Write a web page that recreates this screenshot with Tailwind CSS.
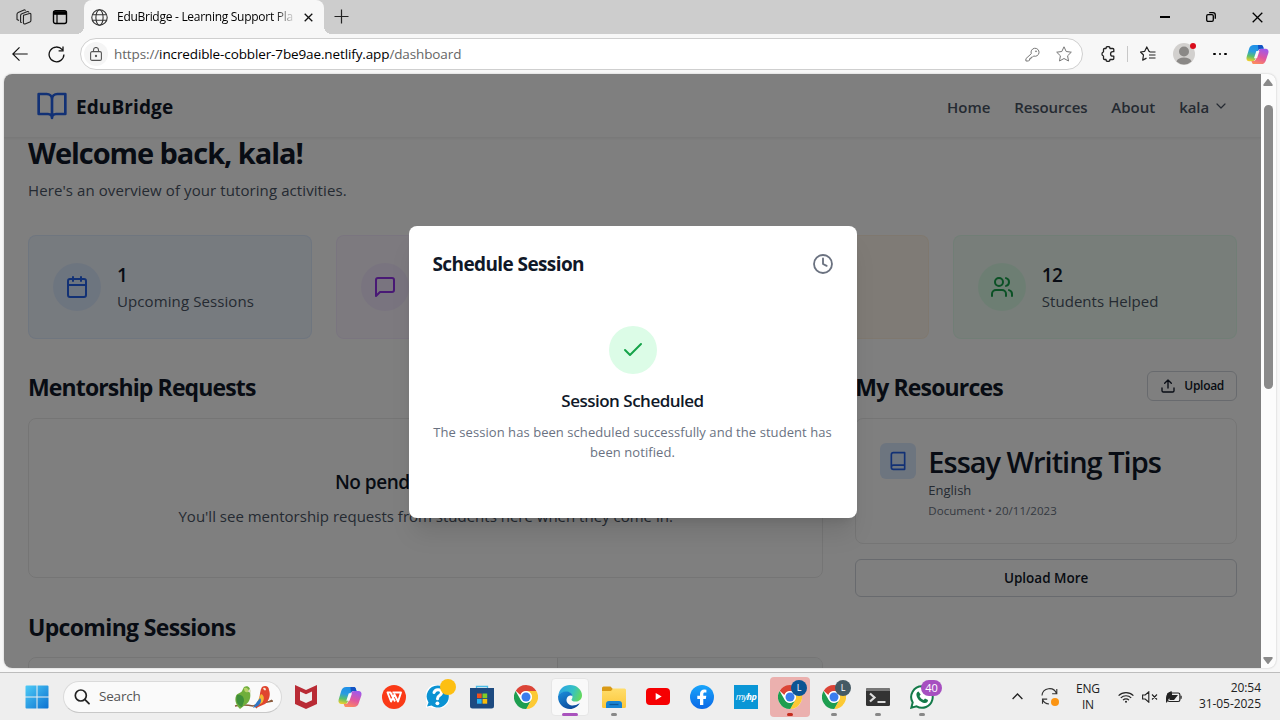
<!DOCTYPE html>
<html lang="en">
<head>
    <meta charset="UTF-8">
    <meta name="viewport" content="width=device-width, initial-scale=1.0">
    <title>EduBridge - Learning Support Platform</title>
    <script src="https://cdn.jsdelivr.net/npm/@tailwindcss/browser@4"></script>
</head>
<body class="w-[1280px] h-[720px] overflow-hidden flex flex-col bg-[#f7f7f7] font-['Open_Sans','Noto_Sans',sans-serif] text-black">

    <!-- Shared symbols -->
    <svg class="absolute size-0" xmlns="http://www.w3.org/2000/svg">
        <defs>
            <linearGradient id="cpA" x1="0.4" y1="0" x2="0.2" y2="1">
                <stop offset="0" stop-color="#1f8fe8"/><stop offset="0.4" stop-color="#2a9ce0"/><stop offset="0.7" stop-color="#5cc06a"/><stop offset="1" stop-color="#f5d02c"/>
            </linearGradient>
            <linearGradient id="cpB" x1="0.6" y1="0" x2="0.2" y2="1">
                <stop offset="0" stop-color="#a259e8"/><stop offset="0.5" stop-color="#e0569f"/><stop offset="1" stop-color="#ff8f5a"/>
            </linearGradient>
            <linearGradient id="winG" x1="0" y1="0" x2="24" y2="24" gradientUnits="userSpaceOnUse">
                <stop offset="0" stop-color="#4fcdf7"/><stop offset="1" stop-color="#0a6fd0"/>
            </linearGradient>
            <linearGradient id="edgeA" x1="0" y1="0.2" x2="1" y2="0.5">
                <stop offset="0" stop-color="#2ba3e6"/><stop offset="0.6" stop-color="#35c1c5"/><stop offset="1" stop-color="#62d860"/>
            </linearGradient>
            <linearGradient id="edgeB" x1="0" y1="0" x2="0.6" y2="1">
                <stop offset="0" stop-color="#1b8fdc"/><stop offset="1" stop-color="#0c4a9b"/>
            </linearGradient>
            <linearGradient id="folder" x1="0" y1="0" x2="0" y2="1">
                <stop offset="0" stop-color="#ffdd6b"/><stop offset="1" stop-color="#fcc73a"/>
            </linearGradient>
            <linearGradient id="fb" x1="0" y1="0" x2="0" y2="1">
                <stop offset="0" stop-color="#19a5fb"/><stop offset="1" stop-color="#0a68e6"/>
            </linearGradient>
        </defs>
        <symbol id="copilot" viewBox="0 0 24 24">
            <path fill="url(#cpA)" d="M8.2 2h7.6c1 0 1.700.6 2 1.600L18.500 6h-2.800c-1.700 0-2.800.8-3.300 2.500l-2.700 8.200c-.5 1.400-1.400 2.300-2.900 2.300H3.500C1.200 19 0 17.200.6 14.800L3.300 5.800C4.100 3.300 5.600 2 8.200 2z"/>
            <path fill="#1453c4" d="M12.500 2h3.300c1 0 1.700.6 2 1.600l.7 2.400h-2.800c-1.300 0-2.200.5-2.800 1.500z"/>
            <path fill="url(#cpB)" d="M15.800 22H8.200c-1 0-1.700-.6-2-1.600L5.700 18.900h1.600c1.700 0 2.500-.7 3-2.200l2.700-8.200c.5-1.700 1.500-2.500 3.200-2.500h4.300c2.300 0 3.500 1.800 2.900 4.200l-2.700 8c-.8 2.500-2.300 3.800-4.900 3.800z"/>
            <path fill="#f7f7f7" d="M10.800 8.300h3.200l-2.500 7.500H8.300z"/>
        </symbol>
        <symbol id="chrome" viewBox="0 0 48 48">
            <circle cx="24" cy="24" r="24" fill="#fff"/>
            <path fill="#db4437" d="M24 0a24 24 0 0 1 20.800 12H24a12 12 0 0 0-11.300 8L3.400 11.700A24 24 0 0 1 24 0z"/>
            <path fill="#fcc934" d="M44.800 12A24 24 0 0 1 24 48l10.400-18A12 12 0 0 0 34.400 18 12 12 0 0 0 24 12z"/>
            <path fill="#1e9e50" d="M24 48A24 24 0 0 1 3.200 12l10.400 18A12 12 0 0 0 24 36a12 12 0 0 0 8-3L24 48z"/>
            <path fill="#1e9e50" d="M24 48l10.400-18A12 12 0 0 1 24 36z"/>
            <circle cx="24" cy="24" r="11.500" fill="#fff"/>
            <circle cx="24" cy="24" r="9" fill="#3b7ded"/>
        </symbol>
    </svg>

    <!-- Tab strip -->
    <div class="h-[34px] shrink-0 bg-[#cdcdcd] flex items-stretch">
        <div class="w-[84px] flex items-center pl-4 gap-[20px]">
            <svg class="size-4" viewBox="0 0 16 16" fill="none" stroke="#222" stroke-width="1.100" stroke-linejoin="round">
                <path d="M7.500 6.200 13.500 4.500a1 1 0 0 1 1.400.9v6.200a1.500 1.500 0 0 1-1 1.400L9 15a1.300 1.300 0 0 1-1.600-1.200z"/>
                <path d="M5.800 13.500 4.600 13.200V6.500a2 2 0 0 1 1.300-1.800L11.500 2.600a1 1 0 0 1 1.300.9"/>
                <path d="M3 11.600 1 10.500V5.200a2 2 0 0 1 1.200-1.800L8 .9a1 1 0 0 1 1.400.8"/>
            </svg>
            <svg class="size-4" viewBox="0 0 16 16" fill="none" stroke="#000" stroke-width="1.400">
                <rect x="1.500" y="1.700" width="13" height="12.800" rx="2"/>
                <path d="M1.500 4h13" stroke-width="3.600"/>
                <path d="M5 4v10" stroke-width="1.200"/>
            </svg>
        </div>
        <div class="w-[240px] bg-[#f7f7f7] rounded-t-lg flex items-center pl-[7px] relative">
            <svg class="size-[17px]" viewBox="0 0 17 17" fill="none" stroke="#333" stroke-width="1.100">
                <circle cx="8.500" cy="8.500" r="7.700"/><ellipse cx="8.500" cy="8.500" rx="3.600" ry="7.700"/>
                <path d="M1.500 5.800h14M1.500 11.200h14"/>
            </svg>
            <span class="ml-[9px] w-[179px] whitespace-nowrap text-[12px] tracking-[-0.28px] pb-px mask-r-from-88%">EduBridge - Learning Support Pla</span>
            <svg class="size-[9px] ml-[8px]" viewBox="0 0 9 9" stroke="#111" stroke-width="1.300"><path d="M.7.700l7.600 7.600M8.300.700.7 8.300"/></svg>
            <div class="absolute -left-2 bottom-0 size-2 bg-[radial-gradient(circle_at_0_0,transparent_8px,#f7f7f7_8px)]"></div>
            <div class="absolute -right-2 bottom-0 size-2 bg-[radial-gradient(circle_at_100%_0,transparent_8px,#f7f7f7_8px)]"></div>
        </div>
        <div class="flex-1 flex items-center pl-[10px] pb-[2px]">
            <svg class="size-[15px]" viewBox="0 0 15 15" stroke="#222" stroke-width="1.200"><path d="M7.500.5v14M.5 7.500h14"/></svg>
        </div>
        <div class="flex items-center pr-[17px] gap-[36px]">
            <div class="w-[10px] h-[1.500px] bg-black"></div>
            <svg class="size-[10px]" viewBox="0 0 10 10" fill="none" stroke="#000" stroke-width="1.300"><rect x=".7" y="2.700" width="6.600" height="6.600" rx="1.300"/><path d="M3.200.7H7A2.300 2.300 0 0 1 9.300 3v3.800"/></svg>
            <svg class="size-[11px]" viewBox="0 0 11 11" stroke="#000" stroke-width="1.300"><path d="m.7.700 9.600 9.600M10.300.7.700 10.300"/></svg>
        </div>
    </div>

    <!-- Toolbar -->
    <div class="h-[40px] shrink-0 flex items-center pl-3">
        <svg class="size-4" viewBox="0 0 16 16" fill="none" stroke="#111" stroke-width="1.200"><path d="M15.700 8H.8M7.500 1.300.8 8l6.700 6.700"/></svg>
        <svg class="size-[17px] ml-[20px]" viewBox="0 0 17 17" fill="none" stroke="#111" stroke-width="1.300"><path d="M14.200 3.700A7.400 7.400 0 1 0 15.900 8.500M15 .6v4.300h-4.400"/></svg>
        <div class="ml-[15px] w-[1003px] h-8 rounded-full border border-[#cfcfcf] bg-white flex items-center pl-[3px]">
            <div class="size-6 rounded-full bg-[#f5f5f5] flex items-center justify-center">
                <svg class="w-3 h-[14px]" viewBox="0 0 12 14" fill="none" stroke="#555" stroke-width="1.100"><rect x=".6" y="4.600" width="10.800" height="8.800" rx="1.500"/><path d="M3.500 4.500V3a2.500 2.500 0 0 1 5 0v1.500"/><circle cx="6" cy="9" r=".6" fill="#555"/></svg>
            </div>
            <span class="ml-[6px] text-[13.500px] tracking-[-0.12px] text-[#666] whitespace-nowrap">https://<span class="text-black">incredible-cobbler-7be9ae.netlify.app</span>/dashboard</span>
            <svg class="ml-auto size-[15px]" viewBox="0 0 15 15" fill="none" stroke="#777" stroke-width="1"><path d="M6.300 6.700A4 4 0 1 1 8.600 9L7.300 10.300H6v1.400H4.600V13L3.600 14H.9v-2.300z"/><circle cx="11" cy="4.300" r=".5"/></svg>
            <svg class="ml-[16px] mr-[10px] size-4" viewBox="0 0 16 16" fill="none" stroke="#777" stroke-width="1" stroke-linejoin="round"><path d="m8 .8 2.200 4.700 5.100.7-3.700 3.600.9 5.200L8 12.500 3.500 15l.9-5.200L.7 6.200l5.100-.7z"/></svg>
        </div>
        <svg class="ml-[17px] size-4" viewBox="0 0 16 16" fill="none" stroke="#222" stroke-width="1.300" stroke-linejoin="round"><path d="M4.500 2.500H6a2 2 0 0 1 4 0h2.800a1 1 0 0 1 1 1v2.200h-1a2.200 2.200 0 0 0 0 4.500h1v2.300a1 1 0 0 1-1 1H10a2 2 0 0 1-4 0H4.500a1 1 0 0 1-1-1v-2.500a2.200 2.200 0 0 1 0-4.200V3.500a1 1 0 0 1 1-1z"/></svg>
        <div class="ml-[11px] w-px h-4 bg-[#c8c8c8]"></div>
        <svg class="ml-3 size-4" viewBox="0 0 16 16" fill="none" stroke="#222" stroke-width="1.200" stroke-linejoin="round"><path d="M10 5.500 9 5.300 6.800.9 4.700 5.300l-4.200.7 3 3-.8 5.100 3.800-2M9.500 6h6M9 9h6.500M9 12h6.500"/></svg>
        <div class="ml-[17px] size-[22px] rounded-full bg-[#d2d0ce] relative">
            <svg class="size-[22px]" viewBox="0 0 22 22" fill="#8a8886"><circle cx="11" cy="8.500" r="5"/><path d="M3.500 18.500c1-3 4-4 7.500-4s6.500 1 7.500 4a11 11 0 0 1-15 0z"/></svg>
            <div class="absolute -right-[1px] top-0 size-[6px] rounded-full bg-[#d90d1c]"></div>
        </div>
        <div class="ml-[18px] flex gap-[3px]">
            <div class="size-[2.500px] rounded-full bg-black"></div><div class="size-[2.500px] rounded-full bg-black"></div><div class="size-[2.500px] rounded-full bg-black"></div>
        </div>
        <svg class="ml-[19px] size-[23px]"><use href="#copilot"/></svg>
    </div>

    <!-- Viewport -->
    <div class="h-[594px] shrink-0 mx-1 flex rounded-lg overflow-hidden bg-[#fcfcfc] shadow-[0_0_2px_#bbb]">
        <div class="w-[1257px] relative overflow-hidden bg-white">
            <nav class="relative z-10 h-16 bg-white border-b border-[#f3f3f3] shadow-xs flex items-center pl-8 pr-[33px]">
                <svg class="size-8" viewBox="0 0 24 24" fill="none" stroke="#2563eb" stroke-width="2" stroke-linecap="round" stroke-linejoin="round"><path d="M2 3h6a4 4 0 0 1 4 4v14a3 3 0 0 0-3-3H2zM22 3h-6a4 4 0 0 0-4 4v14a3 3 0 0 1 3-3h7z"/></svg>
                <span class="ml-2 mt-[3px] text-[19px] font-bold tracking-[0.1px] text-gray-900">EduBridge</span>
                <div class="ml-auto flex items-center gap-6 text-[15px] font-semibold text-gray-600">
                    <span class="mt-[3px]">Home</span>
                    <span class="mt-[3px] tracking-[-0.12px]">Resources</span>
                    <span class="mt-[3px]">About</span>
                    <span class="flex items-center gap-1"><span class="mt-[3px] tracking-[-0.1px]">kala</span>
                        <svg class="size-4 -mr-px" viewBox="0 0 24 24" fill="none" stroke="currentColor" stroke-width="1.800" stroke-linecap="round" stroke-linejoin="round"><path d="m6 9 6 6 6-6"/></svg>
                    </span>
                </div>
            </nav>

            <main class="px-6 -mt-[3px]">
                <h1 class="text-[29px] leading-9 font-bold tracking-[-1.060px] text-gray-900">Welcome back, kala!</h1>
                <p class="mt-[7px] text-[15px] leading-6 tracking-[0.09px] text-gray-600">Here's an overview of your tutoring activities.</p>

                <div class="mt-[33px] grid grid-cols-4 gap-6">
                    <div class="h-[104px] rounded-lg border border-blue-100/80 bg-blue-50 flex items-center px-6">
                        <div class="size-12 rounded-full bg-blue-100 flex items-center justify-center">
                            <svg class="size-6" viewBox="0 0 24 24" fill="none" stroke="#2563eb" stroke-width="2" stroke-linecap="round" stroke-linejoin="round"><rect x="3" y="4" width="18" height="18" rx="2"/><path d="M16 2v4M8 2v4M3 10h18"/></svg>
                        </div>
                        <div class="ml-4">
                            <div class="text-[19px] leading-7 font-semibold text-gray-900">1</div>
                            <div class="text-[15px] leading-6 tracking-[0.1px] text-gray-600">Upcoming Sessions</div>
                        </div>
                    </div>
                    <div class="h-[104px] rounded-lg border border-purple-100/80 bg-purple-50 flex items-center px-6">
                        <div class="size-12 rounded-full bg-purple-100 flex items-center justify-center">
                            <svg class="size-6" viewBox="0 0 24 24" fill="none" stroke="#9333ea" stroke-width="2" stroke-linecap="round" stroke-linejoin="round"><path d="M21 15a2 2 0 0 1-2 2H7l-4 4V5a2 2 0 0 1 2-2h14a2 2 0 0 1 2 2z"/></svg>
                        </div>
                    </div>
                    <div class="h-[104px] rounded-lg border border-orange-100/60 bg-orange-50"></div>
                    <div class="h-[104px] rounded-lg border border-green-100/60 bg-green-50 flex items-center px-6">
                        <div class="size-12 rounded-full bg-green-100 flex items-center justify-center">
                            <svg class="size-6" viewBox="0 0 24 24" fill="none" stroke="#16a34a" stroke-width="2" stroke-linecap="round" stroke-linejoin="round"><path d="M16 21v-2a4 4 0 0 0-4-4H6a4 4 0 0 0-4 4v2"/><circle cx="9" cy="7" r="4"/><path d="M22 21v-2a4 4 0 0 0-3-3.870M16 3.130a4 4 0 0 1 0 7.750"/></svg>
                        </div>
                        <div class="ml-4">
                            <div class="text-[19px] leading-7 font-semibold tracking-[-0.6px] text-gray-900">12</div>
                            <div class="text-[15px] leading-6 tracking-[0.05px] text-gray-600">Students Helped</div>
                        </div>
                    </div>
                </div>

                <div class="mt-8 grid grid-cols-3 gap-8">
                    <div class="col-span-2">
                        <h2 class="text-[23px] leading-8 font-bold tracking-[-0.870px] text-gray-900">Mentorship Requests</h2>
                        <div class="mt-[15px] h-40 rounded-lg border border-[#ebebeb] flex flex-col items-center justify-center">
                            <h3 class="text-[19px] leading-7 font-semibold tracking-[-0.5px] text-gray-900">No pending requests</h3>
                            <p class="mt-2 text-[15px] leading-6 text-gray-600">You'll see mentorship requests from students here when they come in.</p>
                        </div>
                        <h2 class="mt-[33px] text-[23px] leading-8 font-bold tracking-[-0.660px] text-gray-900">Upcoming Sessions</h2>
                        <div class="mt-[14px] h-40 rounded-lg border border-[#ebebeb] flex overflow-hidden">
                            <div class="w-2/3 border-r border-[#e5e5e5]"></div>
                            <div class="flex-1 bg-gray-50"></div>
                        </div>
                    </div>
                    <div>
                        <div class="flex items-center justify-between">
                            <h2 class="text-[23px] leading-8 font-bold tracking-[-0.850px] text-gray-900">My Resources</h2>
                            <div class="h-[30px] -mt-[2px] rounded-md border border-gray-300 flex items-center px-3 text-xs font-semibold tracking-[-0.3px] text-gray-900">
                                <svg class="size-4 mr-2" viewBox="0 0 24 24" fill="none" stroke="currentColor" stroke-width="2" stroke-linecap="round" stroke-linejoin="round"><path d="M21 15v4a2 2 0 0 1-2 2H5a2 2 0 0 1-2-2v-4M17 8l-5-5-5 5M12 3v12"/></svg>
                                Upload
                            </div>
                        </div>
                        <div class="mt-[15px] h-[126px] rounded-lg border border-[#ebebeb] flex p-6">
                            <div class="size-9 rounded-md bg-blue-100 flex items-center justify-center">
                                <svg class="size-5" viewBox="0 0 24 24" fill="none" stroke="#2563eb" stroke-width="2" stroke-linecap="round" stroke-linejoin="round"><path d="M4 19.500v-15A2.500 2.500 0 0 1 6.500 2H20v20H6.500a2.500 2.500 0 0 1 0-5H20"/></svg>
                            </div>
                            <div class="ml-3 pt-px whitespace-nowrap">
                                <div class="text-[29px] leading-9 font-semibold tracking-[-1px] text-gray-900">Essay Writing Tips</div>
                                <div class="text-[13px] leading-5 text-gray-600">English</div>
                                <div class="mt-[3px] text-[11.500px] leading-4 tracking-[0.05px] text-gray-500">Document • 20/11/2023</div>
                            </div>
                        </div>
                        <div class="mt-[15px] h-[38px] rounded-md border border-gray-300 flex items-center justify-center pt-px text-[13.500px] font-semibold text-gray-900">Upload More</div>
                    </div>
                </div>
            </main>

            <!-- Modal -->
            <div class="absolute inset-0 z-20 bg-black/50 flex items-center justify-center pt-px">
                <div class="w-[448px] h-[292px] rounded-lg bg-white shadow-xl p-6">
                    <div class="h-[30px] flex items-center justify-between">
                        <h2 class="text-[19px] font-bold tracking-[-0.6px] text-gray-900">Schedule Session</h2>
                        <svg class="size-[22px] -mr-px -mt-[2px]" viewBox="0 0 24 24" fill="none" stroke="#6b7280" stroke-width="2" stroke-linecap="round" stroke-linejoin="round"><circle cx="12" cy="12" r="9.800"/><path d="M12 6v6l4 2"/></svg>
                    </div>
                    <div class="mt-[46px] flex flex-col items-center text-center">
                        <div class="size-12 rounded-full bg-[#dcfce7] flex items-center justify-center">
                            <svg class="size-6" viewBox="0 0 24 24" fill="none" stroke="#16a34a" stroke-width="2" stroke-linecap="round" stroke-linejoin="round"><path d="M20 6 9 17l-5-5"/></svg>
                        </div>
                        <h3 class="mt-[13px] text-[17px] leading-7 font-semibold tracking-[-0.5px] text-gray-900">Session Scheduled</h3>
                        <p class="mt-[7px] text-[13px] leading-5 tracking-[0.06px] text-gray-500 whitespace-nowrap">The session has been scheduled successfully and the student has<br>been notified.</p>
                    </div>
                </div>
            </div>
        </div>
        <!-- Scrollbar -->
        <div class="flex-1 flex flex-col items-center justify-between pt-[5px] pb-1 pr-px">
            <svg class="w-[10px] h-[7px]" viewBox="0 0 10 7" fill="#8a8a8a"><path d="M4 .7a1.200 1.200 0 0 1 2 0L9.600 5.500Q10 7 9 7H1Q0 7 .4 5.500z"/></svg>
            <div class="w-[9px] h-[284px] -mt-[249px] rounded-full bg-[#8a8a8a]"></div>
            <svg class="w-[10px] h-[7px]" viewBox="0 0 10 7" fill="#8a8a8a"><path d="M4 6.300a1.200 1.200 0 0 0 2 0L9.600 1.500Q10 0 9 0H1Q0 0 .4 1.500z"/></svg>
        </div>
    </div>

    <!-- Taskbar -->
    <div class="mt-1 h-12 shrink-0 bg-[#eeeeee] border-t border-[#bdbdbd] flex items-center pl-[25px] pr-[19px]">
        <svg class="size-6" viewBox="0 0 24 24"><path fill="url(#winG)" d="M.5 1.500a1 1 0 0 1 1-1H11.500v11H.5zM12.500.5h10a1 1 0 0 1 1 1v10h-11zM.5 12.500h11v11H1.500a1 1 0 0 1-1-1zM12.500 12.500h11v10a1 1 0 0 1-1 1h-10z"/></svg>
        <div class="ml-[14px] w-[219px] h-8 rounded-full bg-[#fafafa] border border-[#dadada] border-b-[#c8c8c8] flex items-center pl-[10px] pr-[7px]">
            <svg class="size-4" viewBox="0 0 16 16" fill="none" stroke="#222" stroke-width="1.700" stroke-linecap="round"><circle cx="6.800" cy="6.500" r="5.500"/><path d="m11 10.700 4 4"/></svg>
            <span class="ml-[9px] text-[13.500px] tracking-[-0.2px] text-[#555]">Search</span>
            <svg class="ml-auto w-10 h-6" viewBox="0 0 40 24">
                <path d="M1 21q9-2 18 0 10-4 20-5M34 17l4-2M20 20l3 3" stroke="#8a5a3c" stroke-width="1.300" fill="none"/>
                <path fill="#6fae3c" d="M10 2c4-2 7 1 6 5 1 5 0 10-5 13l-5 4c-3-3-6-8-4-13 1-3 5-3 6-5z"/>
                <path fill="#3f8f3a" d="M3 10c4-1 7 1 7 6l-2 6c-4-1-7-6-5-12z"/>
                <path fill="#b9d36a" d="M10 3c3-1 5 1 4 4-2 1-4 0-4-4z"/>
                <path fill="#e2e2c8" d="M15 4q3 1 1.500 4L14 6.500z"/>
                <path fill="#e0452f" d="M28 2c3-2 7-1 7 3 2 5 0 11-4 14l-9 4c-1-2 2-4 3-8 1-5 1-10 3-13z"/>
                <path fill="#f2b632" d="M27 9c3 1 4 5 1 9l-6 3c1-4 3-8 5-12z"/>
                <path fill="#2f76c4" d="M26 13c2 2 1 5-2 8l-5 2c2-4 5-7 7-10z"/>
                <path fill="#f3ead8" d="M29 3q3-1 3 2-2 1.500-3-2z"/>
            </svg>
        </div>

        <div class="ml-[2px] flex items-center">
            <div class="w-11 h-10 flex items-center justify-center">
                <svg class="w-[22px] h-6" viewBox="0 0 22 24"><path fill="#b92b35" d="M0 0l11 5 11-5v19l-11 5L0 19z"/><path fill="#eee" d="M5 6.500 11 9.300l6-2.800v8.700L11 18l-6-2.800z"/></svg>
            </div>
            <div class="w-11 h-10 flex items-center justify-center"><svg class="size-6"><use href="#copilot"/></svg></div>
            <div class="w-11 h-10 flex items-center justify-center">
                <svg class="size-6" viewBox="0 0 24 24"><circle cx="12" cy="12" r="12" fill="#fa3a17"/><path fill="none" stroke="#fff" stroke-width="1.900" stroke-linejoin="round" d="M10.500 7.500H19L16 16.500 12.500 9.500 9 16.500 5.500 7.500H8.500l4.500 9"/></svg>
            </div>
            <div class="w-11 h-10 flex items-center justify-center relative">
                <svg class="size-[23px] -ml-px" viewBox="0 0 23 23"><path fill="#fff" d="M11.500-1a12.500 12.500 0 0 1 0 25c-3 0-5-.5-7-2L-1 23l2-5A12.500 12.500 0 0 1 11.500-1z"/><path fill="#0b93d3" d="M11.500.5a11 11 0 1 1-6 20L1 21.500l1.500-4A11 11 0 0 1 11.500.5z"/><path fill="none" stroke="#fff" stroke-width="3" stroke-linecap="round" d="M8 7.500q1-3 4.200-2.800c4 .3 4 4 1.600 5.500q-2.300 1.400-2.300 3.500"/><circle cx="11.400" cy="18.300" r="1.900" fill="#fff"/></svg>
                <div class="absolute left-[24px] top-[2px] size-4 rounded-full bg-[#fdbf12]"></div>
            </div>
            <div class="w-11 h-10 flex items-center justify-center">
                <svg class="size-6" viewBox="0 0 24 24"><path fill="none" stroke="#49bce8" stroke-width="1.300" d="M6.500 5V1.500h11V5"/><path fill="#1d4a80" d="M0 3h24v18a2.500 2.500 0 0 1-2.500 2.500h-19A2.500 2.500 0 0 1 0 21z"/><path fill="#f1511b" d="M7 8.500h4.700v4.700H7z"/><path fill="#80cc28" d="M12.500 8.500h4.700v4.700h-4.700z"/><path fill="#29b1f0" d="M7 14h4.700v4.700H7z"/><path fill="#fbbc09" d="M12.500 14h4.700v4.700h-4.700z"/></svg>
            </div>
            <div class="w-11 h-10 flex items-center justify-center"><svg class="size-6"><use href="#chrome"/></svg></div>
            <div class="w-11 h-10 flex items-center justify-center relative">
                <div class="absolute inset-x-[3px] inset-y-[1px] rounded bg-[#f9f9f9] border border-[#e6e6e6]"></div>
                <svg class="size-6 relative" viewBox="0 0 24 24">
                    <path fill="url(#edgeA)" d="M.3 10.500C1.200 4 6 0 12 0c7 0 12 5 12 10.200 0 4-3 6.300-6.300 6.300-3 0-4.200-1-4.200-1.800 0-.7 1-1.200 1-3C14.500 9 11.500 7 8.500 7 4.500 7 1.500 8.500.3 10.500z"/>
                    <path fill="url(#edgeB)" d="M.1 11C1.200 8 4.500 6.500 8 6.500c3.500 0 6.500 2 6.500 5C13.500 9.700 9 10 8.500 14.500c-.3 4 4 6.500 8 5.800 2.300-.4 4-1.300 5.300-2.300C20 21.500 16 24 12 24 5 24-.5 18 .1 11z"/>
                </svg>
                <div class="absolute bottom-[1px] left-[14px] w-4 h-[3px] rounded-full bg-[#a953bd]"></div>
            </div>
            <div class="w-11 h-10 flex items-center justify-center relative">
                <svg class="size-6" viewBox="0 0 24 24"><path fill="#d99a16" d="M0 3a1.500 1.500 0 0 1 1.500-1.500h7L11 4v4H0z"/><path fill="url(#folder)" d="M0 6h9l2-2.500h11.500A1.500 1.500 0 0 1 24 5v16.500a1.500 1.500 0 0 1-1.500 1.500h-21A1.500 1.500 0 0 1 0 21.500z"/><path fill="#1683d3" d="M4 23v-4a3 3 0 0 1 3-3h10a3 3 0 0 1 3 3v4z"/><path stroke="#0a5798" stroke-width="1.300" d="M7.500 19.500h9"/></svg>
                <div class="absolute bottom-[1px] left-[19px] w-[6px] h-[3px] rounded-full bg-[#888]"></div>
            </div>
            <div class="w-11 h-10 flex items-center justify-center">
                <svg class="w-6 h-[17px]" viewBox="0 0 24 17"><rect width="24" height="17" rx="4" fill="#f60002"/><path fill="#fff" d="m9.700 5 6 3.500-6 3.500z"/></svg>
            </div>
            <div class="w-11 h-10 flex items-center justify-center">
                <svg class="size-6" viewBox="0 0 24 24"><circle cx="12" cy="12" r="12" fill="url(#fb)"/><path fill="#fff" d="M10 20v-6H7.300v-3.200H10V9c0-3 1.700-4.500 4.400-4.500l2 .2v2.900h-1.500c-1.300 0-1.600.7-1.600 1.600v1.600h3l-.5 3.200h-2.500v6z"/></svg>
            </div>
            <div class="w-11 h-10 flex items-center justify-center">
                <div class="size-6 bg-[#0a96d6] text-white text-[9px] leading-6 text-center italic tracking-[-0.6px]">my<b>hp</b></div>
            </div>
            <div class="w-11 h-10 flex items-center justify-center relative">
                <div class="absolute inset-x-[2px] inset-y-0 rounded bg-[#ebb0ae]"></div>
                <svg class="size-6 relative"><use href="#chrome"/></svg>
                <div class="absolute left-[23px] top-[3px] size-4 rounded-full bg-[#0d5493] text-white text-[9px] leading-4 text-center">L</div>
                <div class="absolute bottom-[1px] left-[19px] w-[6px] h-[3px] rounded-full bg-[#c42b1c]"></div>
            </div>
            <div class="w-11 h-10 flex items-center justify-center relative">
                <svg class="size-6"><use href="#chrome"/></svg>
                <div class="absolute left-[23px] top-[3px] size-4 rounded-full bg-[#455a64] text-white text-[9px] leading-4 text-center">L</div>
                <div class="absolute bottom-[1px] left-[19px] w-[6px] h-[3px] rounded-full bg-[#888]"></div>
            </div>
            <div class="w-11 h-10 flex items-center justify-center relative">
                <svg class="w-6 h-[18px]" viewBox="0 0 24 18"><rect width="24" height="18" rx="1.500" fill="#333"/><path fill="#777" d="M1.500 0h21A1.500 1.500 0 0 1 24 1.500V3H0V1.500A1.500 1.500 0 0 1 1.500 0z"/><path fill="none" stroke="#ddd" stroke-width="2.200" d="m4 5.500 4.500 4L4 13.500M11.500 14h8"/></svg>
                <div class="absolute bottom-[1px] left-[19px] w-[6px] h-[3px] rounded-full bg-[#888]"></div>
            </div>
            <div class="w-11 h-10 flex items-center justify-center relative">
                <svg class="size-6" viewBox="0 0 24 24"><path fill="#fff" stroke="#147a49" stroke-width="2" d="M12 1.200A10.800 10.800 0 1 1 6.600 21.400L1.300 22.700l1.400-5.200A10.800 10.800 0 0 1 12 1.200z"/><path fill="#147a49" d="M8.500 6.500c-1.500.5-2.500 2-2 4 1 4 4 6.800 8 7.500 2 .2 3.500-1 3.500-3l-3-1.500-1.300 1.500c-2-.7-3.400-2-4.200-4l1.200-1.500z"/></svg>
                <div class="absolute left-[21px] top-[3px] w-[21px] h-4 rounded-full bg-[#a64fc0] text-white text-[11px] leading-4 text-center">40</div>
                <div class="absolute bottom-[1px] left-[19px] w-[6px] h-[3px] rounded-full bg-[#888]"></div>
            </div>
        </div>

        <!-- Tray -->
        <div class="ml-auto flex items-center text-[12px] leading-4 text-[#222]">
            <svg class="w-[11px] h-[7px]" viewBox="0 0 11 7" fill="none" stroke="#222" stroke-width="1.300"><path d="M.6 6 5.500 1l4.900 5"/></svg>
            <div class="ml-[18px] size-[18px] relative">
                <svg class="size-[17px]" viewBox="0 0 17 17" fill="none" stroke="#333" stroke-width="1.100"><path d="M1 7.500A7.500 7.500 0 0 1 15.500 5.500M15.800 1v4.700h-4.700M1.500 15.800v-4.700h4.700M1.500 11.500A7.500 7.500 0 0 0 8 16"/></svg>
                <div class="absolute right-0 bottom-0 size-2 rounded-full bg-[#fb9412]"></div>
            </div>
            <div class="ml-[17px] text-center tracking-[-0.2px]">ENG<br>IN</div>
            <svg class="ml-[18px] w-4 h-3" viewBox="0 0 16 12" fill="none" stroke="#222" stroke-width="1.200"><path d="M.6 4.600a10.500 10.500 0 0 1 14.800 0M2.800 6.900a7.400 7.400 0 0 1 10.400 0M5 9.200a4.200 4.200 0 0 1 6 0"/><circle cx="8" cy="10.800" r="1" fill="#222" stroke="none"/></svg>
            <svg class="ml-2 w-4 h-3" viewBox="0 0 16 12" fill="none" stroke="#222" stroke-width="1.100"><path d="M.6 4v4h2.600l3.600 3.200V.8L3.200 4zM10 3.500l5 5M15 3.500l-5 5"/></svg>
            <svg class="ml-2 w-4 h-3" viewBox="0 0 16 12"><rect x="1.600" y="2" width="12.300" height="8.500" rx="1.800" fill="none" stroke="#222" stroke-width="1.200"/><path fill="#222" d="M3.500 4h8.500L8 9H3.500zM14.500 4.700h1.200v3h-1.200zM0 7Q0 2 5.500 0 7.500 6 2.500 8L1 11.500H0z"/></svg>
            <div class="ml-[17px] -mt-px text-right tracking-[-0.05px]">20:54<br>31-05-2025</div>
        </div>
    </div>
</body>
</html>
